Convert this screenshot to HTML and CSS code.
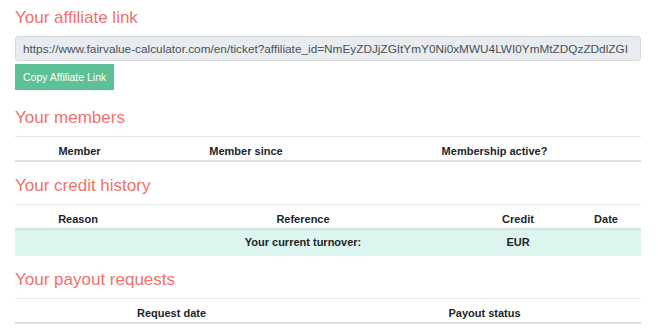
FILE: index.html
```html
<!DOCTYPE html>
<html lang="en">
<head>
  <meta charset="UTF-8" />
  <meta name="viewport" content="width=device-width, initial-scale=1.0">
  <title>Affiliate</title>
  <link rel="stylesheet" href="styles.css">
</head>
<body>
  <div class="container">
    <h2 class="title">Your affiliate link</h2>
    <input type="text" class="link-input" id="affiliate_link" readonly
      value="https://www.fairvalue-calculator.com/en/ticket?affiliate_id=NmEyZDJjZGItYmY0Ni0xMWU4LWI0YmMtZDQzZDdlZGI">
    <button class="copy-btn" onclick="copyLink()">Copy Affiliate Link</button>

    <h2 class="title">Your members</h2>
    <table class="data-table">
      <thead>
        <tr>
          <th class="col-member">Member</th>
          <th class="col-since">Member since</th>
          <th>Membership active?</th>
        </tr>
      </thead>
      <tbody></tbody>
    </table>

    <h2 class="title">Your credit history</h2>
    <table class="data-table">
      <thead>
        <tr>
          <th class="col-reason">Reason</th>
          <th class="col-reference">Reference</th>
          <th class="col-credit">Credit</th>
          <th>Date</th>
        </tr>
      </thead>
      <tbody>
        <tr class="turnover">
          <td></td>
          <td>Your current turnover:</td>
          <td>EUR</td>
          <td></td>
        </tr>
      </tbody>
    </table>

    <h2 class="title">Your payout requests</h2>
    <table class="data-table">
      <thead>
        <tr>
          <th class="col-half">Request date</th>
          <th>Payout status</th>
        </tr>
      </thead>
      <tbody></tbody>
    </table>
  </div>

  <script>
    function copyLink() {
      const input = document.getElementById("affiliate_link");
      input.select();
      document.execCommand("copy");
    }
  </script>
</body>
</html>
```

FILE: styles.css
```css
body {
  margin: 0;
  font-family: "Liberation Sans", Arial, sans-serif;
  color: #212529;
  background: #fff;
}

.container {
  padding: 6px 17px 0 15px;
}

.title {
  font-size: 17px;
  font-weight: normal;
  line-height: 24px;
  color: #f2706c;
  margin: 0 0 6px;
}

.link-input {
  display: block;
  width: 100%;
  height: 25px;
  box-sizing: border-box;
  padding: 0 7px;
  font-family: inherit;
  font-size: 11.8px;
  color: #495057;
  background-color: #e9ecef;
  border: 1px solid #d6dadf;
  border-radius: 3px;
  outline: none;
}

.copy-btn {
  display: block;
  margin: 3px 0 16px;
  height: 26px;
  padding: 0 8px;
  font-family: inherit;
  font-size: 10.5px;
  color: #fff;
  background-color: #5cc196;
  border: none;
  border-radius: 0;
  cursor: pointer;
}

.data-table {
  width: 100%;
  border-collapse: collapse;
  table-layout: fixed;
  margin-bottom: 12px;
  font-size: 11px;
  line-height: 15px;
}

.data-table th,
.data-table td {
  box-sizing: border-box;
  text-align: center;
  font-weight: bold;
}

.data-table th {
  padding: 7px 4px 1px;
  border-top: 1px solid #e3e6ea;
  border-bottom: 2px solid #dcdfe4;
}

.data-table td {
  padding: 5px 4px 6px;
}

.turnover {
  background-color: #dcf5ef;
}

.col-member { width: 129px; }
.col-since { width: 204px; }
.col-reason { width: 126px; }
.col-reference { width: 324px; }
.col-credit { width: 106px; }
.col-half { width: 50%; }
```
